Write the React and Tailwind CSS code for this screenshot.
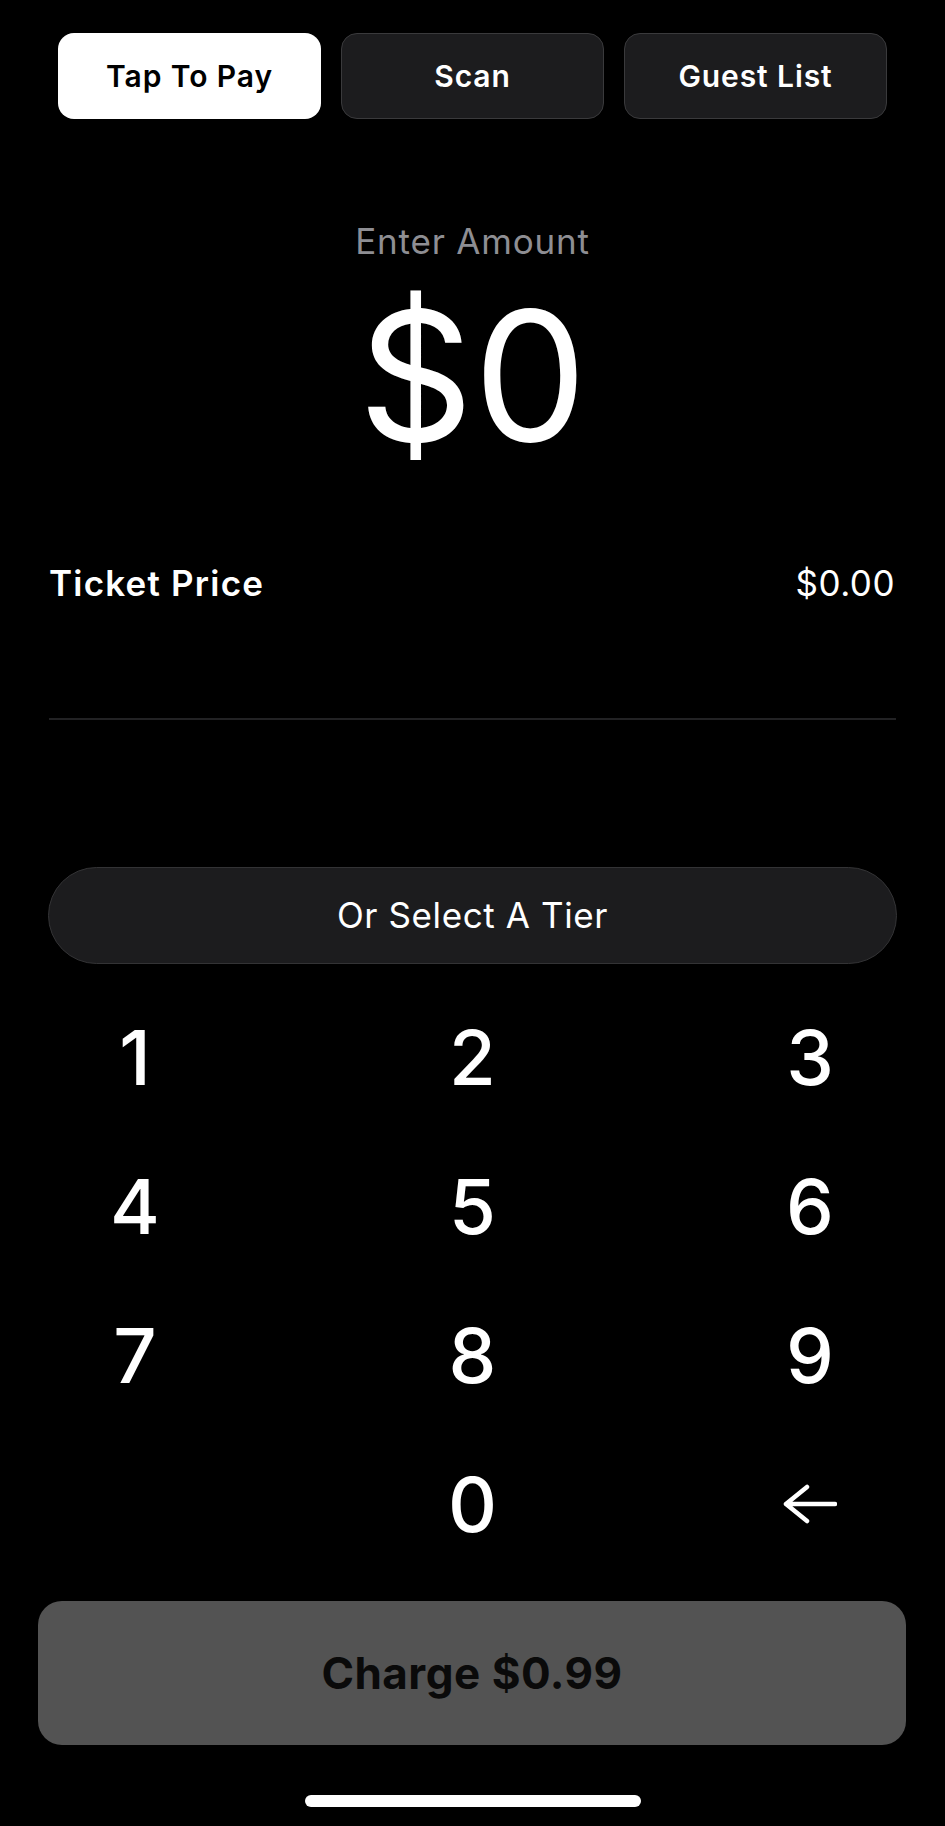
import { useState } from 'react';

const TABS = ['Tap To Pay', 'Scan', 'Guest List'];

const KEYS = [
  ['1', '2', '3'],
  ['4', '5', '6'],
  ['7', '8', '9'],
  ['', '0', 'back'],
];

function BackArrow() {
  return (
    <svg width="54" height="40" viewBox="0 0 54 40" fill="none">
      <path
        d="M52 20H3M24 3L3 20L24 37"
        stroke="white"
        strokeWidth="4.5"
        strokeLinecap="round"
        strokeLinejoin="round"
      />
    </svg>
  );
}

export default function App() {
  const [active, setActive] = useState('Tap To Pay');

  return (
    <div className="min-h-[1826px] w-full bg-black text-white font-['Inter','Noto_Sans',sans-serif] flex flex-col">
      {/* Mode tabs */}
      <div className="pt-[33px] px-[58px] grid grid-cols-3 gap-[20px]">
        {TABS.map((tab) => (
          <button
            key={tab}
            onClick={() => setActive(tab)}
            className={
              tab === active
                ? 'h-[86px] rounded-[16px] bg-white text-black text-[30px] tracking-[0.9px] font-semibold'
                : 'h-[86px] rounded-[16px] bg-[#1c1c1e] border-[1.5px] border-[#3a3a3c] text-white text-[30px] tracking-[0.9px] font-semibold'
            }
          >
            {tab}
          </button>
        ))}
      </div>

      {/* Amount */}
      <div className="mt-[102px] h-[40px] flex items-center justify-center text-[35px] tracking-[0.8px] leading-none text-[#8e8e93]">
        Enter Amount
      </div>
      <div className="mt-[25px] h-[180px] flex items-center justify-center text-[180px] leading-none font-normal">
        $0
      </div>

      {/* Ticket price */}
      <div className="mt-[97px] h-[40px] pl-[49px] pr-[50px] flex items-center justify-between text-[35px] leading-none">
        <span className="font-semibold tracking-[1.2px]">Ticket Price</span>
        <span className="tracking-[0.5px]">$0.00</span>
      </div>
      <div className="mt-[115px] mx-[49px] h-[2px] bg-[#222224]" />

      {/* Tier selector */}
      <button className="mt-[147px] mx-[48px] h-[97px] rounded-full bg-[#1c1c1e] border-[1.5px] border-[#333335] text-[35px] tracking-[0.6px] text-white">
        Or Select A Tier
      </button>

      {/* Keypad */}
      <div className="mt-[18px] px-[75px] flex flex-col">
        {KEYS.map((row, i) => (
          <div key={i} className="h-[149px] flex items-center justify-between">
            {row.map((k, j) => (
              <div
                key={j}
                className="w-[120px] h-[100px] flex items-center justify-center text-[76px] leading-none font-medium"
              >
                {k === 'back' ? <BackArrow /> : k}
              </div>
            ))}
          </div>
        ))}
      </div>

      {/* Charge */}
      <button className="mt-[23px] ml-[38px] mr-[39px] h-[144px] rounded-[24px] bg-[#535353] text-[44px] tracking-[0.5px] font-bold text-[#0a0a0a]">
        Charge $0.99
      </button>

      {/* Home indicator */}
      <div className="mt-[50px] mx-auto w-[336px] h-[12px] rounded-full bg-white" />
    </div>
  );
}
